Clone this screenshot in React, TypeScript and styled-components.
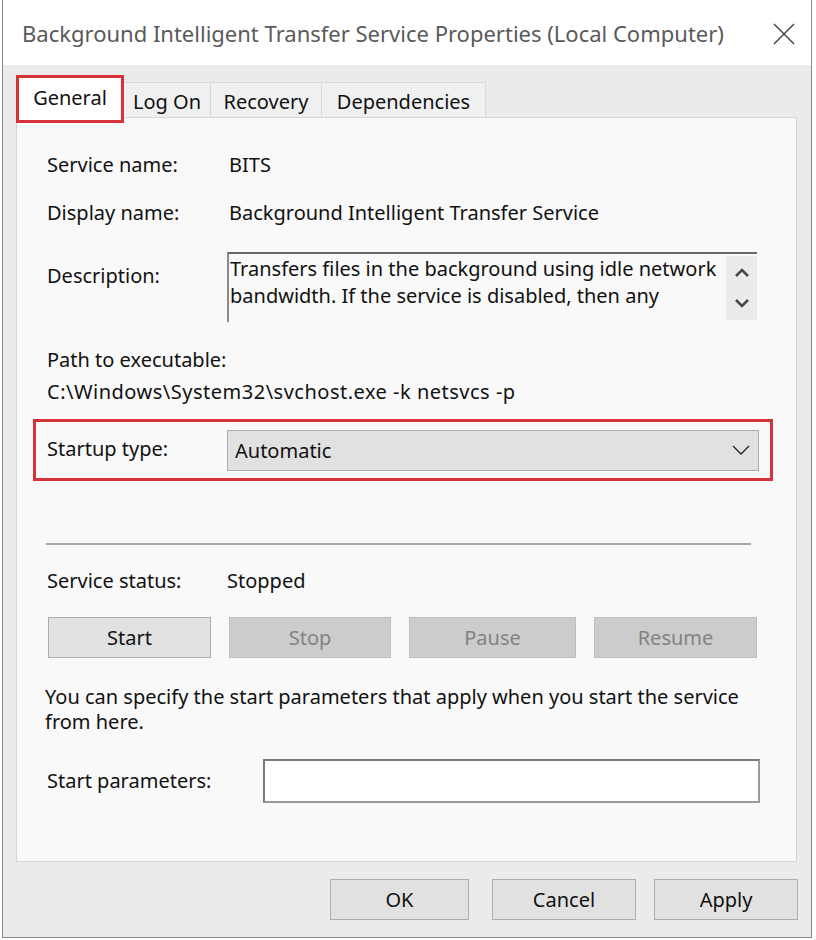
import styled, { createGlobalStyle } from "styled-components";

const GlobalStyle = createGlobalStyle`
  html, body {
    margin: 0;
    padding: 0;
    background: #ffffff;
  }
  body {
    font-family: "Noto Sans", "Open Sans", sans-serif;
    color: #111;
  }
`;

const App = () => {
  return (
    <>
      <GlobalStyle />
      <Window>
        <TitleBar>
          <Title>Background Intelligent Transfer Service Properties (Local Computer)</Title>
          <CloseButton aria-label="Close">
            <svg width="22" height="22" viewBox="0 0 22 22">
              <path d="M1 1 L21 21 M21 1 L1 21" stroke="#3a3a3a" strokeWidth="1.3" fill="none" />
            </svg>
          </CloseButton>
        </TitleBar>
        <Body>
          <TabRow>
            <Tab $active>General</Tab>
            <Tab $w={87}>Log On</Tab>
            <Tab $w={111}>Recovery</Tab>
            <Tab $w={164}>Dependencies</Tab>
          </TabRow>
          <Panel>
            <Row $h={48}>
              <Label>Service name:</Label>
              <Value>BITS</Value>
            </Row>
            <Row $h={48}>
              <Label>Display name:</Label>
              <Value>Background Intelligent Transfer Service</Value>
            </Row>
            <DescRow>
              <Label $top>Description:</Label>
              <DescBox>
                <DescText>
                  Transfers files in the background using idle network bandwidth. If the service is
                  disabled, then any
                </DescText>
                <ScrollCol>
                  <svg width="16" height="12" viewBox="0 0 16 12">
                    <path d="M2 9 L8 3 L14 9" stroke="#4a4a4a" strokeWidth="2.6" fill="none" />
                  </svg>
                  <svg width="16" height="12" viewBox="0 0 16 12">
                    <path d="M2 3 L8 9 L14 3" stroke="#4a4a4a" strokeWidth="2.6" fill="none" />
                  </svg>
                </ScrollCol>
              </DescBox>
            </DescRow>
            <PathLabel>Path to executable:</PathLabel>
            <PathText>C:\Windows\System32\svchost.exe -k netsvcs -p</PathText>
            <Highlight>
              <ComboLabel>Startup type:</ComboLabel>
              <Combo>
                <span>Automatic</span>
                <svg width="18" height="10" viewBox="0 0 18 10">
                  <path d="M1 1 L9 9 L17 1" stroke="#222" strokeWidth="1.3" fill="none" />
                </svg>
              </Combo>
            </Highlight>
            <Separator />
            <Row $h={32} $mt={20}>
              <Label $w={180}>Service status:</Label>
              <Value>Stopped</Value>
            </Row>
            <ButtonRow>
              <ActionButton $w={163}>Start</ActionButton>
              <ActionButton $w={162} disabled>Stop</ActionButton>
              <ActionButton $w={167} disabled>Pause</ActionButton>
              <ActionButton $w={163} disabled>Resume</ActionButton>
            </ButtonRow>
            <HelpText>
              You can specify the start parameters that apply when you start the service
              <br />
              from here.
            </HelpText>
            <ParamRow>
              <Label $w={216}>Start parameters:</Label>
              <ParamInput />
            </ParamRow>
          </Panel>
          <Footer>
            <DialogButton $w={139} $mr={5}>OK</DialogButton>
            <DialogButton $w={144}>Cancel</DialogButton>
            <DialogButton $w={144}>Apply</DialogButton>
          </Footer>
        </Body>
      </Window>
    </>
  );
};

const Window = styled.div`
  box-sizing: border-box;
  width: 810px;
  height: 938px;
  margin-left: 2px;
  border: 1px solid #8a8a8a;
  border-top: none;
  display: flex;
  flex-direction: column;
  background: #ebebeb;
`;

const TitleBar = styled.div`
  height: 65px;
  background: #ffffff;
  display: flex;
  align-items: center;
  justify-content: space-between;
  padding: 0 16px 0 19px;
`;

const Title = styled.div`
  font-size: 22px;
  color: #5a5a5a;
  white-space: nowrap;
`;

const CloseButton = styled.div`
  width: 22px;
  height: 22px;
  display: flex;
  margin-top: 2px;
`;

const Body = styled.div`
  flex: 1;
  padding: 10px 14px 0 13px;
  display: flex;
  flex-direction: column;
`;

const TabRow = styled.div`
  display: flex;
  align-items: flex-end;
  height: 42px;
  position: relative;
  z-index: 1;
`;

const Tab = styled.div<{ $active?: boolean; $w?: number }>`
  box-sizing: border-box;
  display: flex;
  align-items: center;
  justify-content: center;
  font-size: 20px;
  color: #111;
  ${(p) =>
    p.$active
      ? `
    width: 108px;
    height: 48px;
    margin-bottom: -6px;
    background: #ffffff;
    border: 3px solid #d5323a;
    padding-bottom: 4px;
  `
      : `
    width: ${p.$w}px;
    height: 35px;
    background: #f0f0f0;
    border: 1px solid #d9d9d9;
    border-bottom: none;
    border-left: none;
    padding-top: 2px;
  `}
`;

const Panel = styled.div`
  box-sizing: border-box;
  height: 745px;
  background: #f9f9f9;
  border: 1px solid #d6d6d6;
  padding: 23px 0 0 30px;
  display: flex;
  flex-direction: column;
`;

const Row = styled.div<{ $h: number; $mt?: number }>`
  display: flex;
  align-items: center;
  height: ${(p) => p.$h}px;
  margin-top: ${(p) => p.$mt ?? 0}px;
`;

const Label = styled.div<{ $w?: number; $top?: boolean }>`
  width: ${(p) => p.$w ?? 182}px;
  flex-shrink: 0;
  font-size: 20px;
  line-height: 28px;
  align-self: ${(p) => (p.$top ? "flex-start" : "center")};
  padding-top: ${(p) => (p.$top ? 10 : 0)}px;
`;

const Value = styled.div`
  font-size: 20px;
  line-height: 28px;
`;

const DescRow = styled.div`
  display: flex;
  margin-top: 15px;
`;

const DescBox = styled.div`
  box-sizing: border-box;
  width: 530px;
  height: 70px;
  margin-left: -2px;
  border-top: 2px solid #666666;
  border-left: 2px solid #8a8a8a;
  display: flex;
  justify-content: space-between;
`;

const DescText = styled.div`
  font-size: 20px;
  line-height: 27px;
  padding: 1px 0 0 1px;
  width: 490px;
`;

const ScrollCol = styled.div`
  width: 31px;
  margin: 2px 0 2px;
  background: #ebebeb;
  display: flex;
  flex-direction: column;
  align-items: center;
  justify-content: space-around;
  padding: 2px 0;
`;

const PathLabel = styled.div`
  font-size: 20px;
  line-height: 32px;
  margin-top: 22px;
`;

const PathText = styled.div`
  font-size: 20px;
  line-height: 32px;
  letter-spacing: 0.5px;
`;

const Highlight = styled.div`
  box-sizing: border-box;
  width: 740px;
  height: 62px;
  margin: 11px 0 0 -14px;
  border: 3px solid #d5323a;
  display: flex;
  align-items: center;
  padding: 0 11px 0 11px;
`;

const ComboLabel = styled.div`
  width: 180px;
  flex-shrink: 0;
  font-size: 20px;
  margin-top: -3px;
`;

const Combo = styled.div`
  box-sizing: border-box;
  flex: 1;
  height: 41px;
  background: #e1e1e1;
  border: 1px solid #adadad;
  display: flex;
  align-items: center;
  justify-content: space-between;
  padding: 0 8px 0 7px;
  font-size: 20px;
`;

const Separator = styled.div`
  width: 705px;
  height: 2px;
  margin: 62px 0 0 -1px;
  background: #a8a8a8;
`;

const ButtonRow = styled.div`
  display: flex;
  margin: 20px 0 0 1px;
  gap: 18px;
`;

const ActionButton = styled.button<{ $w: number }>`
  box-sizing: border-box;
  width: ${(p) => p.$w}px;
  height: 41px;
  font-family: inherit;
  font-size: 20px;
  color: #111;
  background: #e1e1e1;
  border: 1px solid #adadad;
  padding: 0;

  &:disabled {
    background: #cccccc;
    border-color: #bfbfbf;
    color: #838383;
  }
`;

const HelpText = styled.div`
  font-size: 20px;
  line-height: 25px;
  margin-top: 26px;
  margin-left: -2px;
`;

const ParamRow = styled.div`
  display: flex;
  align-items: center;
  margin-top: 25px;
`;

const ParamInput = styled.div`
  box-sizing: border-box;
  width: 497px;
  height: 44px;
  background: #ffffff;
  border: 2px solid #7a7a7a;
  border-right-color: #9a9a9a;
  border-bottom-color: #9a9a9a;
`;

const Footer = styled.div`
  display: flex;
  justify-content: flex-end;
  gap: 18px;
  margin: 17px -1px 0 0;
`;

const DialogButton = styled.button<{ $w: number; $mr?: number }>`
  box-sizing: border-box;
  width: ${(p) => p.$w}px;
  height: 41px;
  margin-right: ${(p) => p.$mr ?? 0}px;
  font-family: inherit;
  font-size: 20px;
  color: #111;
  background: #e1e1e1;
  border: 1px solid #adadad;
  padding: 0;
`;

export default App;
